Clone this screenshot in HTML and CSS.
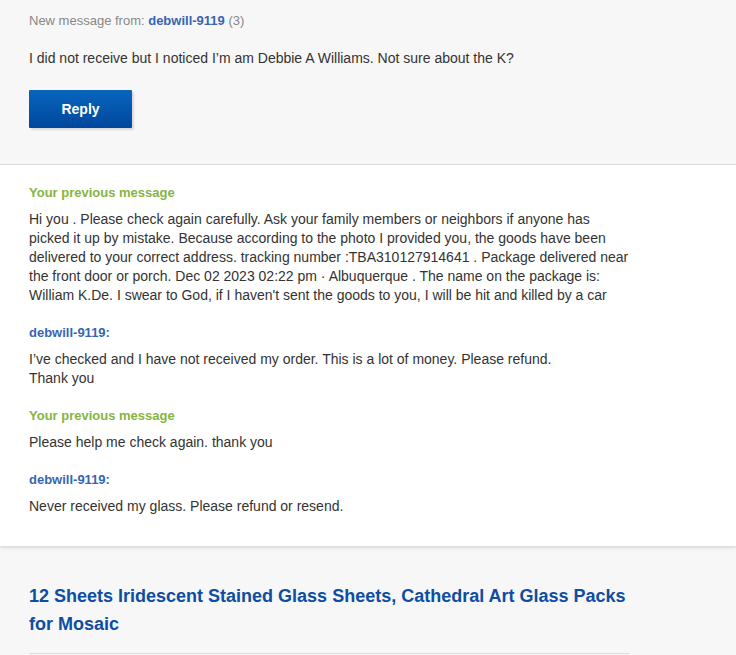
FILE: index.html
```html
<!DOCTYPE html>
<html>
<head>
<meta charset="utf-8">
<link rel="stylesheet" href="styles.css">
</head>
<body>
<section class="top">
  <div class="wrap">
    <p class="from">New message from: <span class="user">debwill-9119</span> (3)</p>
    <p class="msg first">I did not receive but I noticed I’m am Debbie A Williams. Not sure about the K?</p>
    <button class="reply">Reply</button>
  </div>
</section>
<section class="thread">
  <div class="wrap">
    <h4 class="mine">Your previous message</h4>
    <p class="msg">Hi you . Please check again carefully. Ask your family members or neighbors if anyone has picked it up by mistake. Because according to the photo I provided you, the goods have been delivered to your correct address. tracking number :TBA310127914641 . Package delivered near the front door or porch. Dec 02 2023 02:22 pm · Albuquerque . The name on the package is: William K.De. I swear to God, if I haven't sent the goods to you, I will be hit and killed by a car</p>
    <h4 class="theirs">debwill-9119:</h4>
    <p class="msg">I’ve checked and I have not received my order. This is a lot of money. Please refund.<br>Thank you</p>
    <h4 class="mine">Your previous message</h4>
    <p class="msg">Please help me check again. thank you</p>
    <h4 class="theirs">debwill-9119:</h4>
    <p class="msg">Never received my glass. Please refund or resend.</p>
  </div>
</section>
<section class="item">
  <div class="wrap">
    <h2 class="title">12 Sheets Iridescent Stained Glass Sheets, Cathedral Art Glass Packs for Mosaic</h2>
    <div class="rule"></div>
  </div>
</section>
</body>
</html>
```
FILE: styles.css
```css
html, body {
  margin: 0;
  padding: 0;
  background: #f7f7f7;
  font-family: "Liberation Sans", Arial, sans-serif;
  color: #333;
}
.wrap {
  width: 600px;
  margin-left: 29px;
}
.top {
  background: #f7f7f7;
  border-bottom: 1px solid #dcdcdc;
  padding: 13px 0 36px;
}
.from {
  margin: 0;
  font-size: 13px;
  line-height: 16px;
  color: #888;
}
.user {
  color: #3665b3;
  font-weight: bold;
}
.msg {
  margin: 0;
  font-size: 14px;
  line-height: 19px;
  color: #333;
}
.msg.first {
  margin-top: 20px;
  width: 700px;
}
.reply {
  margin-top: 22px;
  width: 103px;
  height: 38px;
  border: none;
  border-radius: 1px;
  background: linear-gradient(#0865bd, #00479d);
  box-shadow: 2px 2px 2px rgba(0,0,0,0.12);
  color: #fff;
  font-family: "Liberation Sans", Arial, sans-serif;
  font-weight: bold;
  font-size: 14px;
  display: block;
  padding: 0;
}
.thread {
  background: #fff;
  padding: 20px 0 30px;
  box-shadow: 0 2px 3px rgba(0,0,0,0.12);
  position: relative;
}
.thread h4 {
  margin: 0 0 9px;
  font-size: 13px;
  line-height: 16px;
  font-weight: bold;
}
.thread .msg + h4 {
  margin-top: 20px;
}
.mine { color: #86b53f; }
.theirs { color: #3665b3; }
.item {
  padding: 36px 0 0;
}
.title {
  margin: 0;
  font-family: "Liberation Sans", Arial, sans-serif;
  font-size: 18px;
  line-height: 28px;
  font-weight: bold;
  color: #0d4da3;
}
.rule {
  margin-top: 15px;
  border-top: 1px solid #dcdcdc;
}
```
